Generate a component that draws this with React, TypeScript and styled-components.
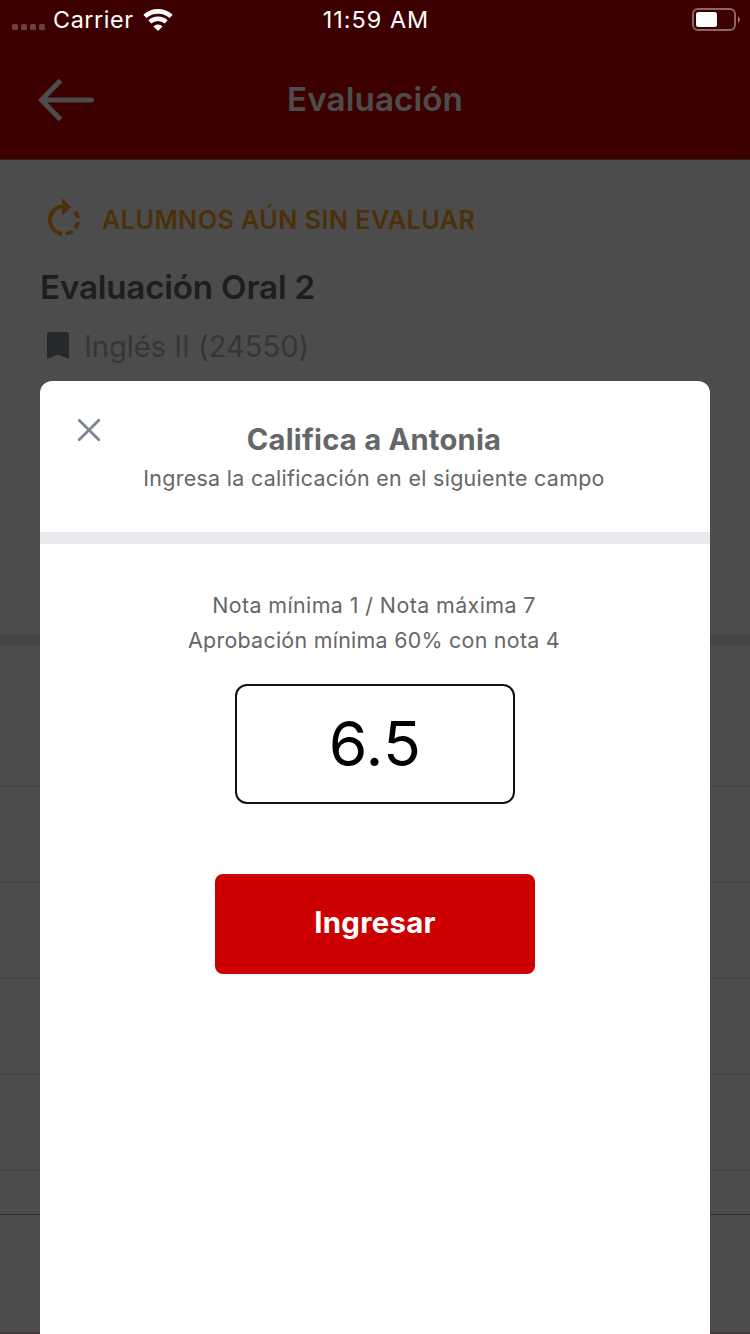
import React from 'react';
import styled, { createGlobalStyle } from 'styled-components';

const GlobalStyle = createGlobalStyle`
  * { box-sizing: border-box; }
  body {
    margin: 0;
    background: #fff;
    font-family: Inter, "Liberation Sans", sans-serif;
    -webkit-font-smoothing: antialiased;
  }
`;

const Phone = styled.div`
  position: relative;
  width: 750px;
  height: 1334px;
  overflow: hidden;
  background: #fff;
`;

const Screen = styled.div`
  display: flex;
  flex-direction: column;
  height: 100%;
`;

const Header = styled.header`
  display: grid;
  grid-template-columns: 94px 1fr 94px;
  align-items: center;
  height: 160px;
  padding-top: 39px;
  background: #cc0000;
  border-bottom: 1px solid #a56a6a;
`;

const BackIcon = styled.svg`
  width: 58px;
  height: 44px;
  margin: 2px 0 0 37px;
`;

const HeaderTitle = styled.h1`
  margin: 0 0 1px;
  text-align: center;
  color: #fff;
  font-size: 33.2px;
  line-height: 40px;
  font-weight: 600;
  letter-spacing: 0.1px;
`;

const Summary = styled.section`
  display: flex;
  flex-direction: column;
  height: 475px;
  padding: 36px 40px 0;
`;

const Status = styled.div`
  display: flex;
  align-items: center;
  gap: 14px;
  height: 48px;
  color: #ffa023;
  font-size: 25.2px;
  font-weight: 600;
`;

const StatusLabel = styled.span`
  letter-spacing: 0.44px;
`;

const ExamName = styled.h2`
  margin: 23px 0 0;
  color: #666;
  font-size: 33.2px;
  line-height: 40px;
  font-weight: 600;
  letter-spacing: -0.2px;
`;

const Course = styled.div`
  display: flex;
  align-items: center;
  gap: 15px;
  height: 40px;
  margin-top: 19px;
  padding-left: 7px;
  color: #b4b4b4;
  font-size: 29.2px;
  letter-spacing: -0.05px;
`;

const BookmarkIcon = styled.svg`
  margin-bottom: 1px;
`;

const List = styled.ul`
  flex: 1;
  margin: 0;
  padding: 0;
  list-style: none;
  border-top: 10px solid #e8e8ee;
`;

const Row = styled.li<{ $height: number; $line: string; $width?: number }>`
  height: ${(p) => p.$height}px;
  border-bottom: ${(p) => p.$width ?? 2}px solid ${(p) => p.$line};
`;

const Overlay = styled.div`
  position: absolute;
  inset: 0;
  padding: 381px 40px 0;
  background: rgba(0, 0, 0, 0.7);
`;

const Modal = styled.div`
  display: flex;
  flex-direction: column;
  height: 953px;
  border-radius: 12px 12px 0 0;
  background: #fff;
  color: #666;
  text-align: center;
`;

const ModalHeader = styled.div`
  display: grid;
  grid-template-columns: 60px 1fr 62px;
  height: 163px;
  padding-top: 37px;
  border-bottom: 12px solid #e9e9ee;
`;

const CloseIcon = styled.svg`
  width: 24px;
  height: 24px;
  margin-left: 37px;
`;

const ModalTitle = styled.h3`
  margin: 3px 0 2px;
  font-size: 29.2px;
  line-height: 38px;
  font-weight: 700;
  letter-spacing: 0.22px;
`;

const Caption = styled.p<{ $spacing: number }>`
  margin: 0;
  font-size: 21.4px;
  line-height: 35px;
  letter-spacing: ${(p) => p.$spacing}px;
`;

const ScaleNotes = styled.div`
  padding-right: 2px;
`;

const ModalBody = styled.div`
  display: flex;
  flex-direction: column;
  align-items: center;
  padding-top: 44px;
`;

const GradeInput = styled.input`
  width: 280px;
  height: 120px;
  margin-top: 26px;
  padding: 0 0 2px;
  border: 2px solid #111;
  border-radius: 12px;
  background: #fff;
  color: #000;
  outline: 0;
  font-family: inherit;
  font-size: 62.4px;
  text-align: center;
  letter-spacing: 0.3px;
`;

const Submit = styled.button`
  width: 320px;
  height: 100px;
  margin-top: 70px;
  padding: 0 0 4px;
  border: 0;
  border-radius: 8px;
  background: #cc0000;
  color: #fff;
  font-family: inherit;
  font-size: 29.4px;
  font-weight: 700;
  letter-spacing: 0.25px;
`;

const StatusBar = styled.div`
  position: absolute;
  inset: 0 0 auto;
  display: grid;
  grid-template-columns: 1fr auto 1fr;
  align-items: center;
  height: 40px;
  padding: 0 10px 0 12px;
  color: #fff;
  font-size: 23.4px;
`;

const CarrierGroup = styled.div`
  display: flex;
  align-items: center;
  gap: 9px;
`;

const Signal = styled.div`
  display: flex;
  gap: 3px;
  padding-top: 14px;
`;

const SignalDot = styled.i`
  width: 6px;
  height: 6px;
  border-radius: 1.5px;
  background: rgba(255, 255, 255, 0.25);
`;

const Clock = styled.span`
  padding-bottom: 2px;
  letter-spacing: 1px;
`;

const CarrierName = styled.span`
  margin-left: -1px;
  padding-bottom: 2px;
  letter-spacing: 0.55px;
`;

const BatteryIcon = styled.svg`
  justify-self: end;
`;

export default function App() {
  return (
    <>
      <GlobalStyle />
      <Phone>
        <Screen>
          <Header>
            <BackIcon viewBox="0 0 58 44" fill="none" stroke="#fff" strokeWidth="5">
              <path d="M23.500 2.500 4.500 22 23.500 41.500" />
              <path d="M5 22H54.5" strokeLinecap="round" />
            </BackIcon>
            <HeaderTitle>Evaluación</HeaderTitle>
          </Header>
          <Summary>
            <Status>
              <svg width="48" height="48" viewBox="0 0 24 24" fill="currentColor">
                <path d="M15.55 5.55 11 1v3.07C7.06 4.56 4 7.92 4 12s3.05 7.44 7 7.93v-2.02c-2.84-.48-5-2.94-5-5.91s2.16-5.43 5-5.91V10l4.55-4.45zM19.93 11c-.17-1.39-.72-2.73-1.62-3.89l-1.42 1.42c.54.75.88 1.6 1.02 2.47h2.02zM13 17.9v2.02c1.39-.17 2.74-.71 3.9-1.61l-1.44-1.44c-.75.54-1.59.89-2.46 1.03zm3.89-2.42 1.42 1.41c.9-1.16 1.45-2.5 1.62-3.89h-2.02c-.14.87-.48 1.72-1.02 2.48z" />
              </svg>
              <StatusLabel>ALUMNOS AÚN SIN EVALUAR</StatusLabel>
            </Status>
            <ExamName>Evaluación Oral 2</ExamName>
            <Course>
              <BookmarkIcon width="22" height="27" viewBox="0 0 22 27" fill="#7e8a93">
                <path d="M2.5 0H19.5Q22 0 22 2.5V27L11 22.5 0 27V2.5Q0 0 2.5 0Z" />
              </BookmarkIcon>
              <span>Inglés II (24550)</span>
            </Course>
          </Summary>
          <List>
            <Row $height={142} $line="#e4e4e6" />
            <Row $height={96} $line="#e4e4e6" />
            <Row $height={96} $line="#e4e4e6" />
            <Row $height={96} $line="#e4e4e6" />
            <Row $height={96} $line="#e4e4e6" />
            <Row $height={44} $line="#a7a7aa" $width={1} />
            <Row $height={119} $line="#d8c4cc" />
          </List>
        </Screen>
        <Overlay>
          <Modal role="dialog">
            <ModalHeader>
              <CloseIcon viewBox="0 0 24 24" fill="none" stroke="#7e8790" strokeWidth="2.8" strokeLinecap="round">
                <path d="M2.200 2.200 21.800 21.800M21.800 2.200 2.200 21.800" />
              </CloseIcon>
              <div>
                <ModalTitle>Califica a Antonia</ModalTitle>
                <Caption $spacing={0.32}>Ingresa la calificación en el siguiente campo</Caption>
              </div>
            </ModalHeader>
            <ModalBody>
              <ScaleNotes>
                <Caption $spacing={0.42}>Nota mínima 1 / Nota máxima 7</Caption>
                <Caption $spacing={0.28}>Aprobación mínima 60% con nota 4</Caption>
              </ScaleNotes>
              <GradeInput defaultValue="6.5" />
              <Submit>Ingresar</Submit>
            </ModalBody>
          </Modal>
        </Overlay>
        <StatusBar>
          <CarrierGroup>
            <Signal>
              <SignalDot />
              <SignalDot />
              <SignalDot />
              <SignalDot />
            </Signal>
            <CarrierName>Carrier</CarrierName>
            <svg width="30" height="22" viewBox="0 0 30 22" fill="none" stroke="#fff">
              <path d="M1.900 7.400A19.600 19.600 0 0 1 28.100 7.400" strokeWidth="4.600" />
              <path d="M6.840 12.900A12.200 12.200 0 0 1 23.160 12.900" strokeWidth="4.300" />
              <path d="M10.400 17.400a6.500 6.500 0 0 1 9.200 0L15 22Z" fill="#fff" stroke="none" />
            </svg>
          </CarrierGroup>
          <Clock>11:59 AM</Clock>
          <BatteryIcon width="48" height="24" viewBox="0 0 48 24">
            <rect x="1" y="1" width="42" height="21" rx="5" fill="none" stroke="#fff" strokeOpacity=".4" strokeWidth="2" />
            <rect x="4" y="4" width="21" height="15" rx="2.5" fill="#fff" />
            <path d="M46 8q3.500 3.500 0 7z" fill="#fff" fillOpacity=".5" />
          </BatteryIcon>
        </StatusBar>
      </Phone>
    </>
  );
}
